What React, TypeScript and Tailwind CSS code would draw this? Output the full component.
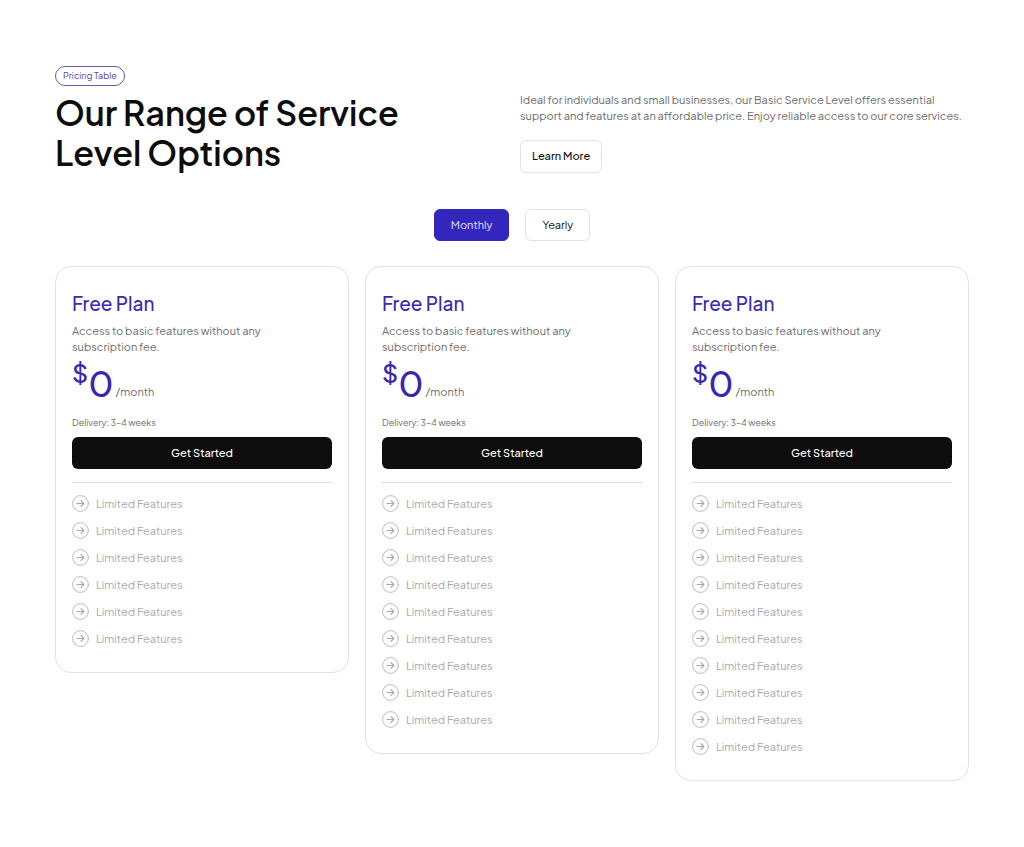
import { useState } from "react";

const plans = [
  { id: "starter", features: 6 },
  { id: "growth", features: 9 },
  { id: "scale", features: 10 },
];

function ArrowCircle() {
  return (
    <svg
      viewBox="0 0 17 17"
      fill="none"
      stroke="currentColor"
      strokeLinecap="round"
      strokeLinejoin="round"
      className="size-[17px] shrink-0"
      aria-hidden="true"
    >
      <circle cx="8.5" cy="8.5" r="7.9" strokeWidth="0.8" />
      <path d="M5 8.5h6.8M9 5.7l2.8 2.8L9 11.3" strokeWidth="1.2" />
    </svg>
  );
}

function PlanCard({ features }: { features: number }) {
  return (
    <article className="rounded-2xl border border-[#e2e2e2] px-4 pt-6 pb-[25px]">
      <h2 className="text-[19px] leading-6 font-medium text-[#3b2ab0]">Free Plan</h2>
      <p className="mt-2 text-[11px] leading-4 text-[#6b6b6b]">
        Access to basic features without any
        <br />
        subscription fee.
      </p>
      <div className="mt-1 flex h-11 items-end text-[#3727b0]">
        <span className="self-start text-[25px] leading-7 font-medium">$</span>
        <span className="text-[35px] leading-10 font-medium">0</span>
        <span className="ml-0.5 pb-px text-[11px] leading-5 text-[#6b6b6b]">/month</span>
      </div>
      <p className="mt-3 text-[9px] leading-4 text-[#6b6b6b]">Delivery: 3–4 weeks</p>
      <button
        type="button"
        className="mt-1.5 h-8 w-full rounded-md bg-[#0d0d0d] text-[11px] font-medium text-white"
      >
        Get Started
      </button>
      <hr className="mt-[13px] border-[#dedede]" />
      <ul className="mt-3 flex flex-col gap-2.5 text-[#a9a9a9]">
        {Array.from({ length: features }, (_, i) => (
          <li key={i} className="flex h-[17px] items-center gap-[7px] text-[11px] leading-4">
            <ArrowCircle />
            Limited Features
          </li>
        ))}
      </ul>
    </article>
  );
}

export default function App() {
  const [period, setPeriod] = useState("Monthly");
  return (
    <main className="px-[55px] pt-[66px] pb-16 font-['Plus_Jakarta_Sans','Inter',sans-serif] text-[#0d0d0d]">
      <header className="grid grid-cols-2 items-end gap-4">
        <div>
          <div className="flex">
            <span className="flex h-5 items-center rounded-full border border-[#6558b5] px-[7px] text-[9px] text-[#5748b0]">
              Pricing Table
            </span>
          </div>
          <h1 className="mt-[7px] text-[34px] leading-10 font-semibold whitespace-nowrap">
            Our Range of Service
            <br />
            Level Options
          </h1>
        </div>
        <div>
          <p className="text-[11px] leading-4 text-[#6b6b6b]">
            Ideal for individuals and small businesses, our Basic Service Level offers essential
            <br />
            support and features at an affordable price. Enjoy reliable access to our core services.
          </p>
          <button
            type="button"
            className="mt-4 h-[33px] rounded-md border border-[#e2e2e2] px-[11px] text-[11px] font-medium"
          >
            Learn More
          </button>
        </div>
      </header>
      <div className="mt-9 flex justify-center gap-4">
        {["Monthly", "Yearly"].map((label) => (
          <button
            key={label}
            type="button"
            aria-pressed={period === label}
            onClick={() => setPeriod(label)}
            className={
              period === label
                ? "h-8 rounded-md border border-[#3326bd] bg-[#3326bd] px-4 text-[11px] text-[#e4e1fa]"
                : "h-8 rounded-md border border-[#e2e2e2] px-4 text-[11px]"
            }
          >
            {label}
          </button>
        ))}
      </div>
      <section className="mt-[25px] grid grid-cols-3 items-start gap-4">
        {plans.map((plan) => (
          <PlanCard key={plan.id} features={plan.features} />
        ))}
      </section>
    </main>
  );
}
